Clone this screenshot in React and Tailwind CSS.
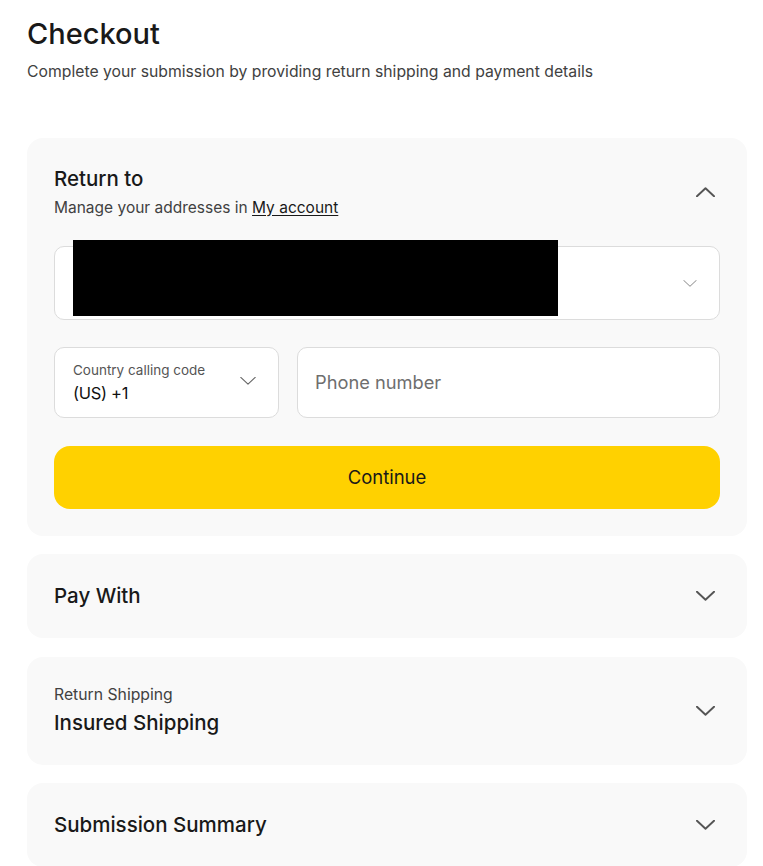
import React from "react";

const Chevron = ({ up = false, className = "", stroke = "#555", sw = 2 }) => (
  <svg viewBox="0 0 20 10" className={className} fill="none">
    <path
      d={up ? "M1 9.5L10 1l9 8.5" : "M1 0.5L10 9l9-8.5"}
      stroke={stroke}
      strokeWidth={sw}
      strokeLinecap="round"
      strokeLinejoin="round"
    />
  </svg>
);

export default function App() {
  return (
    <div
      className="min-h-[866px] bg-white pl-[27px] pr-[16px] pt-[17px] text-[#191919]"
      style={{ fontFamily: "Inter, 'Liberation Sans', sans-serif" }}
    >
      <h1 className="text-[29px] font-medium leading-[34px]">Checkout</h1>
      <p className="mt-[10px] text-[15.75px] leading-[22px] text-[#414141]">
        Complete your submission by providing return shipping and payment details
      </p>

      <div className="mt-[55px] flex flex-col gap-[18.4px]">
        {/* Return to */}
        <div className="rounded-[16px] bg-[#f9f9f9] px-[27px] pt-[28px] pb-[27px]">
          <div className="flex items-center justify-between">
            <div>
              <div className="text-[20.5px] font-medium leading-[26px]">Return to</div>
              <div className="mt-[5px] text-[15.5px] leading-[21px] text-[#414141]">
                Manage your addresses in{" "}
                <a className="text-[#191919] underline underline-offset-2">My account</a>
              </div>
            </div>
            <Chevron up className="mr-[5px] h-[10px] w-[19px]" />
          </div>

          <div className="relative mt-[28px]">
            <div className="flex h-[74px] items-center justify-end rounded-[10px] border border-[#dcdcdc] bg-white pr-[22px]">
              <Chevron className="h-[7px] w-[14px]" stroke="#7a7a7a" sw={1.3} />
            </div>
            <div className="absolute left-[19px] top-[-6px] h-[76px] w-[485px] bg-black" />
          </div>

          <div className="mt-[27px] flex gap-[18px]">
            <div className="flex h-[71px] w-[225px] items-center justify-between rounded-[10px] border border-[#dcdcdc] bg-white pl-[18px] pr-[22px]">
              <div>
                <div className="text-[13.5px] leading-[17px] text-[#555]">Country calling code</div>
                <div className="mt-[3px] text-[16.5px] leading-[22px] tracking-[-0.3px] text-[#111]">(US) +1</div>
              </div>
              <Chevron className="mb-[3px] h-[8px] w-[16px]" stroke="#666" sw={1.4} />
            </div>
            <div className="flex h-[71px] flex-1 items-center rounded-[10px] border border-[#dcdcdc] bg-white px-[17px]">
              <span className="text-[18.25px] text-[#6e6e6e]">Phone number</span>
            </div>
          </div>

          <button className="mt-[28px] flex h-[63px] w-full items-center justify-center rounded-[16px] bg-[#ffd100] text-[18.5px] text-[#191919]">
            Continue
          </button>
        </div>

        {/* Pay With */}
        <div className="flex h-[84px] items-center justify-between rounded-[16px] bg-[#f9f9f9] px-[27px]">
          <div className="text-[20.5px] font-medium leading-[26px]">Pay With</div>
          <Chevron className="mr-[5px] h-[10px] w-[19px]" />
        </div>

        {/* Return Shipping */}
        <div className="flex h-[108px] items-center justify-between rounded-[16px] bg-[#f9f9f9] px-[27px]">
          <div>
            <div className="text-[15.75px] leading-[20px] text-[#414141]">Return Shipping</div>
            <div className="mt-[5px] text-[20.5px] font-medium leading-[26px]">Insured Shipping</div>
          </div>
          <Chevron className="mr-[5px] h-[10px] w-[19px]" />
        </div>

        {/* Submission Summary */}
        <div className="flex h-[84px] items-center justify-between rounded-[16px] bg-[#f9f9f9] px-[27px]">
          <div className="text-[20.5px] font-medium leading-[26px]">Submission Summary</div>
          <Chevron className="mr-[5px] h-[10px] w-[19px]" />
        </div>
      </div>
    </div>
  );
}
